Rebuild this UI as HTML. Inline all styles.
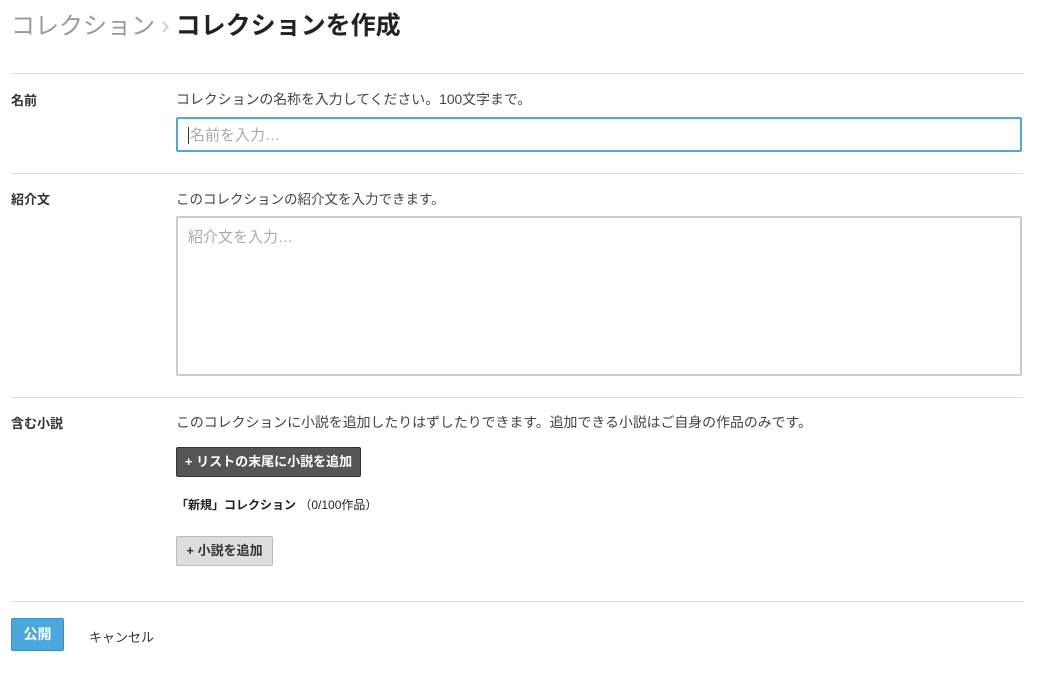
<!DOCTYPE html>
<html><head><meta charset="utf-8"><style>
*{box-sizing:border-box;margin:0;padding:0}
body{width:1038px;height:683px;background:#fff;font-family:"Liberation Sans","Noto Sans CJK JP",sans-serif;color:#333;position:relative;overflow:hidden}
.a{position:absolute}
h1{position:absolute;left:11px;top:9px;font-size:25px;font-weight:bold;color:#222;white-space:nowrap;line-height:32px}
h1 .g{font-weight:normal;color:#999;font-size:24px}
h1 .s{color:#ccc;font-weight:normal;font-size:26px;margin:0 6px 0 6px}
.hr{position:absolute;left:11px;width:1012px;height:1px;background:#ddd}
.lb{position:absolute;left:11px;font-size:13px;font-weight:bold;color:#333}
.d{position:absolute;left:176px;font-size:13.9px;color:#444;white-space:nowrap}
.in{position:absolute;left:176px;width:846px;border:1px solid #bbb;border-radius:2px;font-size:15px;color:#aaa;padding:6px 11px}
</style></head><body>
<h1><span class="g">コレクション</span><span class="s">›</span>コレクションを作成</h1>
<div class="hr" style="top:73px"></div>
<div class="lb" style="top:90px">名前</div>
<div class="d" style="top:89px">コレクションの名称を入力してください。100文字まで。</div>
<div class="in" style="top:117px;height:35px;border:2px solid #4ea8dc;padding:5px 10px"><span style="border-left:1px solid #333;padding-left:1px">名前を入力…</span></div>
<div class="hr" style="top:173px"></div>
<div class="lb" style="top:189px">紹介文</div>
<div class="d" style="top:188px;font-size:13.5px">このコレクションの紹介文を入力できます。</div>
<div class="in" style="top:216px;height:160px;border:2px solid #ccc;padding:8px 10px">紹介文を入力…</div>
<div class="hr" style="top:397px"></div>
<div class="lb" style="top:413px">含む小説</div>
<div class="d" style="top:412px">このコレクションに小説を追加したりはずしたりできます。追加できる小説はご自身の作品のみです。</div>
<div class="a" style="left:176px;top:447px;width:185px;height:30px;background:#555;border:1px solid #333;border-radius:2px;color:#fff;font-size:13px;font-weight:bold;text-align:center;line-height:28px">+ リストの末尾に小説を追加</div>
<div class="a" style="left:176px;top:496px;font-size:12px;font-weight:bold;color:#222;white-space:nowrap">「新規」コレクション <span style="font-weight:normal">（0/100作品）</span></div>
<div class="a" style="left:176px;top:536px;width:97px;height:30px;background:#ddd;border:1px solid #bbb;border-radius:2px;color:#333;font-size:13px;font-weight:bold;text-align:center;line-height:28px">+ 小説を追加</div>
<div class="hr" style="top:601px"></div>
<div class="a" style="left:11px;top:618px;width:53px;height:33px;background:#4aa8de;border:1px solid #3a90c8;border-radius:2px;color:#fff;font-size:14px;font-weight:bold;text-align:center;line-height:31px">公開</div>
<div class="a" style="left:89px;top:627px;font-size:13px;color:#333">キャンセル</div>
</body></html>
